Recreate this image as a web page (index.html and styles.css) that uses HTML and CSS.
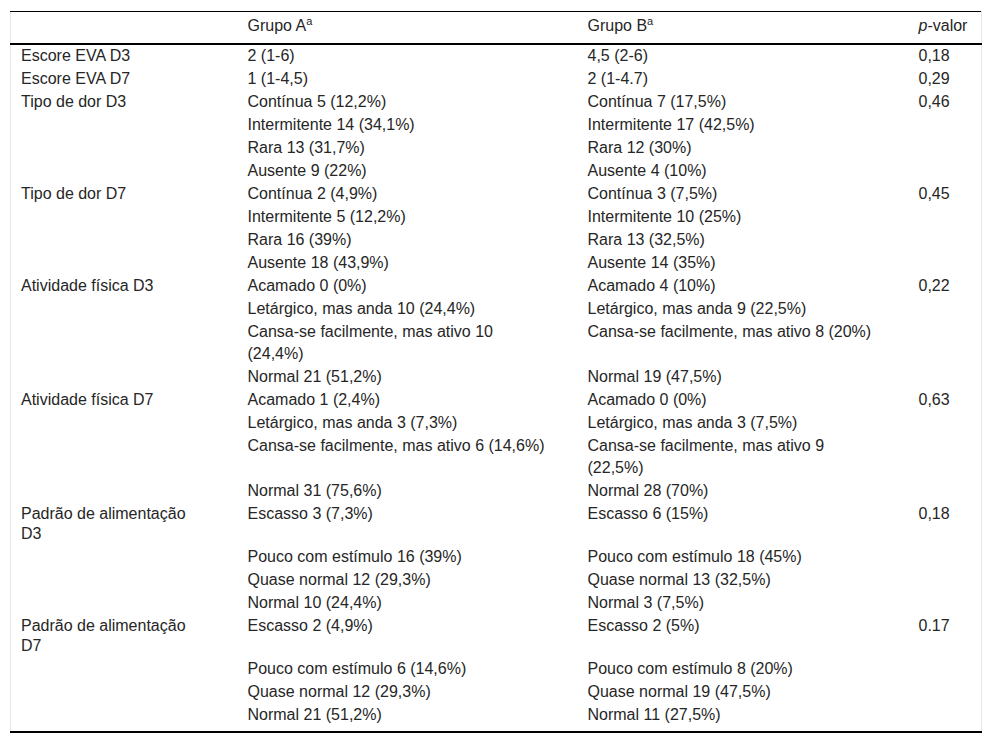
FILE: index.html
```html
<!DOCTYPE html>
<html lang="pt">
<head>
<meta charset="utf-8">
<link rel="stylesheet" href="styles.css">
<title>Tabela</title>
</head>
<body>
<div class="wrap">
<table class="data">
<colgroup>
<col class="c1"><col class="c2"><col class="c3"><col class="c4">
</colgroup>
<thead>
<tr><th></th><th>Grupo A<sup>a</sup></th><th>Grupo B<sup>a</sup></th><th><i>p</i>-valor</th></tr>
</thead>
<tbody>
<tr><td>Escore EVA D3</td><td>2 (1-6)</td><td>4,5 (2-6)</td><td>0,18</td></tr>
<tr><td>Escore EVA D7</td><td>1 (1-4,5)</td><td>2 (1-4.7)</td><td>0,29</td></tr>
<tr><td>Tipo de dor D3</td><td>Contínua 5 (12,2%)</td><td>Contínua 7 (17,5%)</td><td>0,46</td></tr>
<tr><td></td><td>Intermitente 14 (34,1%)</td><td>Intermitente 17 (42,5%)</td><td></td></tr>
<tr><td></td><td>Rara 13 (31,7%)</td><td>Rara 12 (30%)</td><td></td></tr>
<tr><td></td><td>Ausente 9 (22%)</td><td>Ausente 4 (10%)</td><td></td></tr>
<tr><td>Tipo de dor D7</td><td>Contínua 2 (4,9%)</td><td>Contínua 3 (7,5%)</td><td>0,45</td></tr>
<tr><td></td><td>Intermitente 5 (12,2%)</td><td>Intermitente 10 (25%)</td><td></td></tr>
<tr><td></td><td>Rara 16 (39%)</td><td>Rara 13 (32,5%)</td><td></td></tr>
<tr><td></td><td>Ausente 18 (43,9%)</td><td>Ausente 14 (35%)</td><td></td></tr>
<tr><td>Atividade física D3</td><td>Acamado 0 (0%)</td><td>Acamado 4 (10%)</td><td>0,22</td></tr>
<tr><td></td><td>Letárgico, mas anda 10 (24,4%)</td><td>Letárgico, mas anda 9 (22,5%)</td><td></td></tr>
<tr><td></td><td>Cansa-se facilmente, mas ativo 10 (24,4%)</td><td>Cansa-se facilmente, mas ativo 8 (20%)</td><td></td></tr>
<tr><td></td><td>Normal 21 (51,2%)</td><td>Normal 19 (47,5%)</td><td></td></tr>
<tr><td>Atividade física D7</td><td>Acamado 1 (2,4%)</td><td>Acamado 0 (0%)</td><td>0,63</td></tr>
<tr><td></td><td>Letárgico, mas anda 3 (7,3%)</td><td>Letárgico, mas anda 3 (7,5%)</td><td></td></tr>
<tr><td></td><td>Cansa-se facilmente, mas ativo 6 (14,6%)</td><td>Cansa-se facilmente, mas ativo 9 (22,5%)</td><td></td></tr>
<tr><td></td><td>Normal 31 (75,6%)</td><td>Normal 28 (70%)</td><td></td></tr>
<tr><td>Padrão de alimentação D3</td><td>Escasso 3 (7,3%)</td><td>Escasso 6 (15%)</td><td>0,18</td></tr>
<tr><td></td><td>Pouco com estímulo 16 (39%)</td><td>Pouco com estímulo 18 (45%)</td><td></td></tr>
<tr><td></td><td>Quase normal 12 (29,3%)</td><td>Quase normal 13 (32,5%)</td><td></td></tr>
<tr><td></td><td>Normal 10 (24,4%)</td><td>Normal 3 (7,5%)</td><td></td></tr>
<tr><td>Padrão de alimentação D7</td><td>Escasso 2 (4,9%)</td><td>Escasso 2 (5%)</td><td>0.17</td></tr>
<tr><td></td><td>Pouco com estímulo 6 (14,6%)</td><td>Pouco com estímulo 8 (20%)</td><td></td></tr>
<tr><td></td><td>Quase normal 12 (29,3%)</td><td>Quase normal 19 (47,5%)</td><td></td></tr>
<tr><td></td><td>Normal 21 (51,2%)</td><td>Normal 11 (27,5%)</td><td></td></tr>
</tbody>
</table>
</div>
</body>
</html>
```
FILE: styles.css
```css
html, body {
  margin: 0;
  padding: 0;
  background: #fff;
}
.wrap {
  padding: 11px 11px 0 10px;
}
.data {
  width: 971px;
  border-collapse: collapse;
  table-layout: fixed;
  font-family: "Liberation Sans", Arial, sans-serif;
  font-size: 16px;
  color: #262626;
  border-top: 1px solid #000;
  border-bottom: 2px solid #000;
  border-left: 1px solid #e6e6e6;
  border-right: 1px solid #e6e6e6;
}
.c1 { width: 227px; }
.c2 { width: 340px; }
.c3 { width: 331px; }
.c4 { width: 73px; }
.data th {
  font-weight: normal;
  text-align: left;
  vertical-align: top;
  line-height: 20px;
  padding: 4px 30px 7px 10px;
  border-bottom: 2px solid #000;
}
.data th sup {
  font-size: 11px;
  line-height: 0;
  vertical-align: 6px;
}
.data td {
  text-align: left;
  vertical-align: top;
  line-height: 22px;
  padding: 0 30px 1px 10px;
}
.data td:first-child {
  line-height: 20px;
  padding-top: 1px;
  padding-bottom: 2px;
}
.data th:last-child, .data td:last-child {
  padding-right: 4px;
}
.data tbody tr:last-child td {
  padding-bottom: 5px;
}
```
